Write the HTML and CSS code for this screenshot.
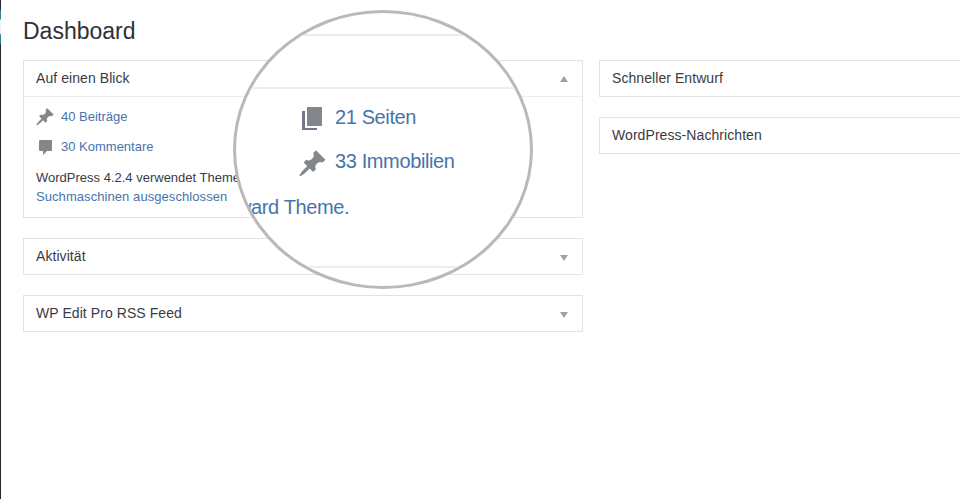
FILE: index.html
```html
<!DOCTYPE html>
<html lang="de">
<head>
<meta charset="utf-8">
<title>Dashboard</title>
<link rel="stylesheet" href="styles.css">
</head>
<body>
<svg class="defs" aria-hidden="true">
  <symbol id="pin" viewBox="1 1 18 18"><path d="M10.44 3.02l1.82-1.82 6.36 6.35-1.83 1.82c-1.05-.68-2.48-.57-3.41.36l-.75.75c-.92.93-1.04 2.35-.35 3.41l-1.83 1.82-2.41-2.41-2.8 2.79c-.42.42-3.38 2.71-3.8 2.290s1.860-3.390 2.280-3.810l2.790-2.790L4.100 9.360l1.830-1.820c1.050.69 2.480.57 3.400-.36l.75-.75c.93-.92 1.050-2.350.36-3.410z"/></symbol>
</svg>
<div class="app">
  <aside class="rail"></aside>
  <main class="main">
    <h1>Dashboard</h1>
    <div class="columns">
      <div class="column">
        <section class="card">
          <header><h2>Auf einen Blick</h2><i class="arrow up"></i></header>
          <div class="glance">
            <ul>
              <li><svg class="icon"><use href="#pin"/></svg><a>40 Beiträge</a></li>
              <li><svg class="icon" viewBox="0 0 18 18"><path d="M4 2h11q1 0 1 1v9q0 1-1 1h-4l-4 4v-4H4q-1 0-1-1V3q0-1 1-1z"/></svg><a>30 Kommentare</a></li>
            </ul>
            <p>WordPress 4.2.4 verwendet Theme</p>
            <p><a class="wide">Suchmaschinen ausgeschlossen</a></p>
          </div>
        </section>
        <section class="card"><header><h2>Aktivität</h2><i class="arrow"></i></header></section>
        <section class="card"><header><h2>WP Edit Pro RSS Feed</h2><i class="arrow"></i></header></section>
      </div>
      <div class="column side">
        <section class="card"><header><h2>Schneller Entwurf</h2></header></section>
        <section class="card"><header><h2>WordPress-Nachrichten</h2></header></section>
      </div>
    </div>
  </main>
</div>
<div class="lens">
  <div class="lens-head"></div>
  <div class="lens-body">
    <div class="lens-row"><svg class="pages" viewBox="0 0 22 24"><path d="M5 0h15v19H5z"/><path class="back" d="M0 4h3v17h12v2H0z"/></svg><a>21 Seiten</a></div>
    <div class="lens-row"><svg class="big-pin"><use href="#pin"/></svg><a>33 Immobilien</a></div>
    <p><a>ward Theme.</a></p>
  </div>
</div>
</body>
</html>
```
FILE: styles.css
```css
* { box-sizing: border-box; }
body {
  margin: 0;
  height: 499px;
  overflow: hidden;
  background: #fff;
  color: #3b3b3f;
  font: 13px/19px "Liberation Sans", Arial, sans-serif;
}
h1, h2, p, ul { margin: 0; padding: 0; font-weight: 400; }
ul { list-style: none; }
a { color: #4674ab; }
svg { fill: #82878c; flex: none; }
.defs { position: absolute; width: 0; height: 0; }
.app { display: flex; height: 499px; }
.rail {
  width: 1px;
  background: linear-gradient(#26282b 9px, #3a8296 11px 19px, #e8f2f4 20px 33px, #3a8296 35px 43px, #26282b 45px);
}
.main { flex: 1; min-width: 0; padding: 17px 0 0 22px; }
h1 { height: 43px; font-size: 23px; line-height: 29px; color: #303036; }
.columns { display: grid; grid-template-columns: 560px minmax(0, 1fr); gap: 16px; }
.column { display: flex; flex-direction: column; gap: 20px; }
.card { border: 1px solid #e2e2e2; background: #fff; }
.side .card { border-right: 0; }
.card header { display: flex; align-items: center; justify-content: space-between; height: 35px; padding: 0 14px 0 12px; }
h2 { font-size: 14px; line-height: 20px; padding-bottom: 2px; letter-spacing: 0.07px; }
.arrow { border: 4px solid transparent; border-top: 6px solid #a0a3a6; border-bottom: 0; position: relative; top: 1px; }
.arrow.up { border-top: 0; border-bottom: 6px solid #a0a3a6; top: 0; }
.glance { height: 121px; padding: 4px 12px; border-top: 1px solid #ececec; }
.glance li { display: flex; align-items: center; height: 30px; gap: 7px; }
.icon { width: 18px; height: 18px; margin-top: 2px; }
.glance ul { height: 67px; }
.wide { letter-spacing: 0.07px; }
.lens {
  position: absolute;
  left: 233px;
  top: 10px;
  width: 300px;
  height: 279px;
  overflow: hidden;
  border: 3px solid #beb7b7;
  border-radius: 50%;
  background: #fff;
  font-size: 20px;
  line-height: 24px;
  letter-spacing: -0.38px;
}
.lens-head { height: 74px; background: linear-gradient(#ececec, #ececec) 0 21px / 100% 2px no-repeat; }
.lens-body { height: 181px; padding: 6px 0 0 63px; border-top: 2px solid #eee; border-bottom: 2px solid #eee; }
.lens-row { display: flex; align-items: center; height: 44px; }
.lens-row a { margin-left: auto; width: 195px; }
.pages { width: 22px; height: 24px; margin: 4px 0 0 3px; }
.pages .back { fill: #77758a; }
.big-pin { width: 27px; height: 27px; margin-top: 4px; }
.lens p { margin: 12px 0 0 -62px; }
```
